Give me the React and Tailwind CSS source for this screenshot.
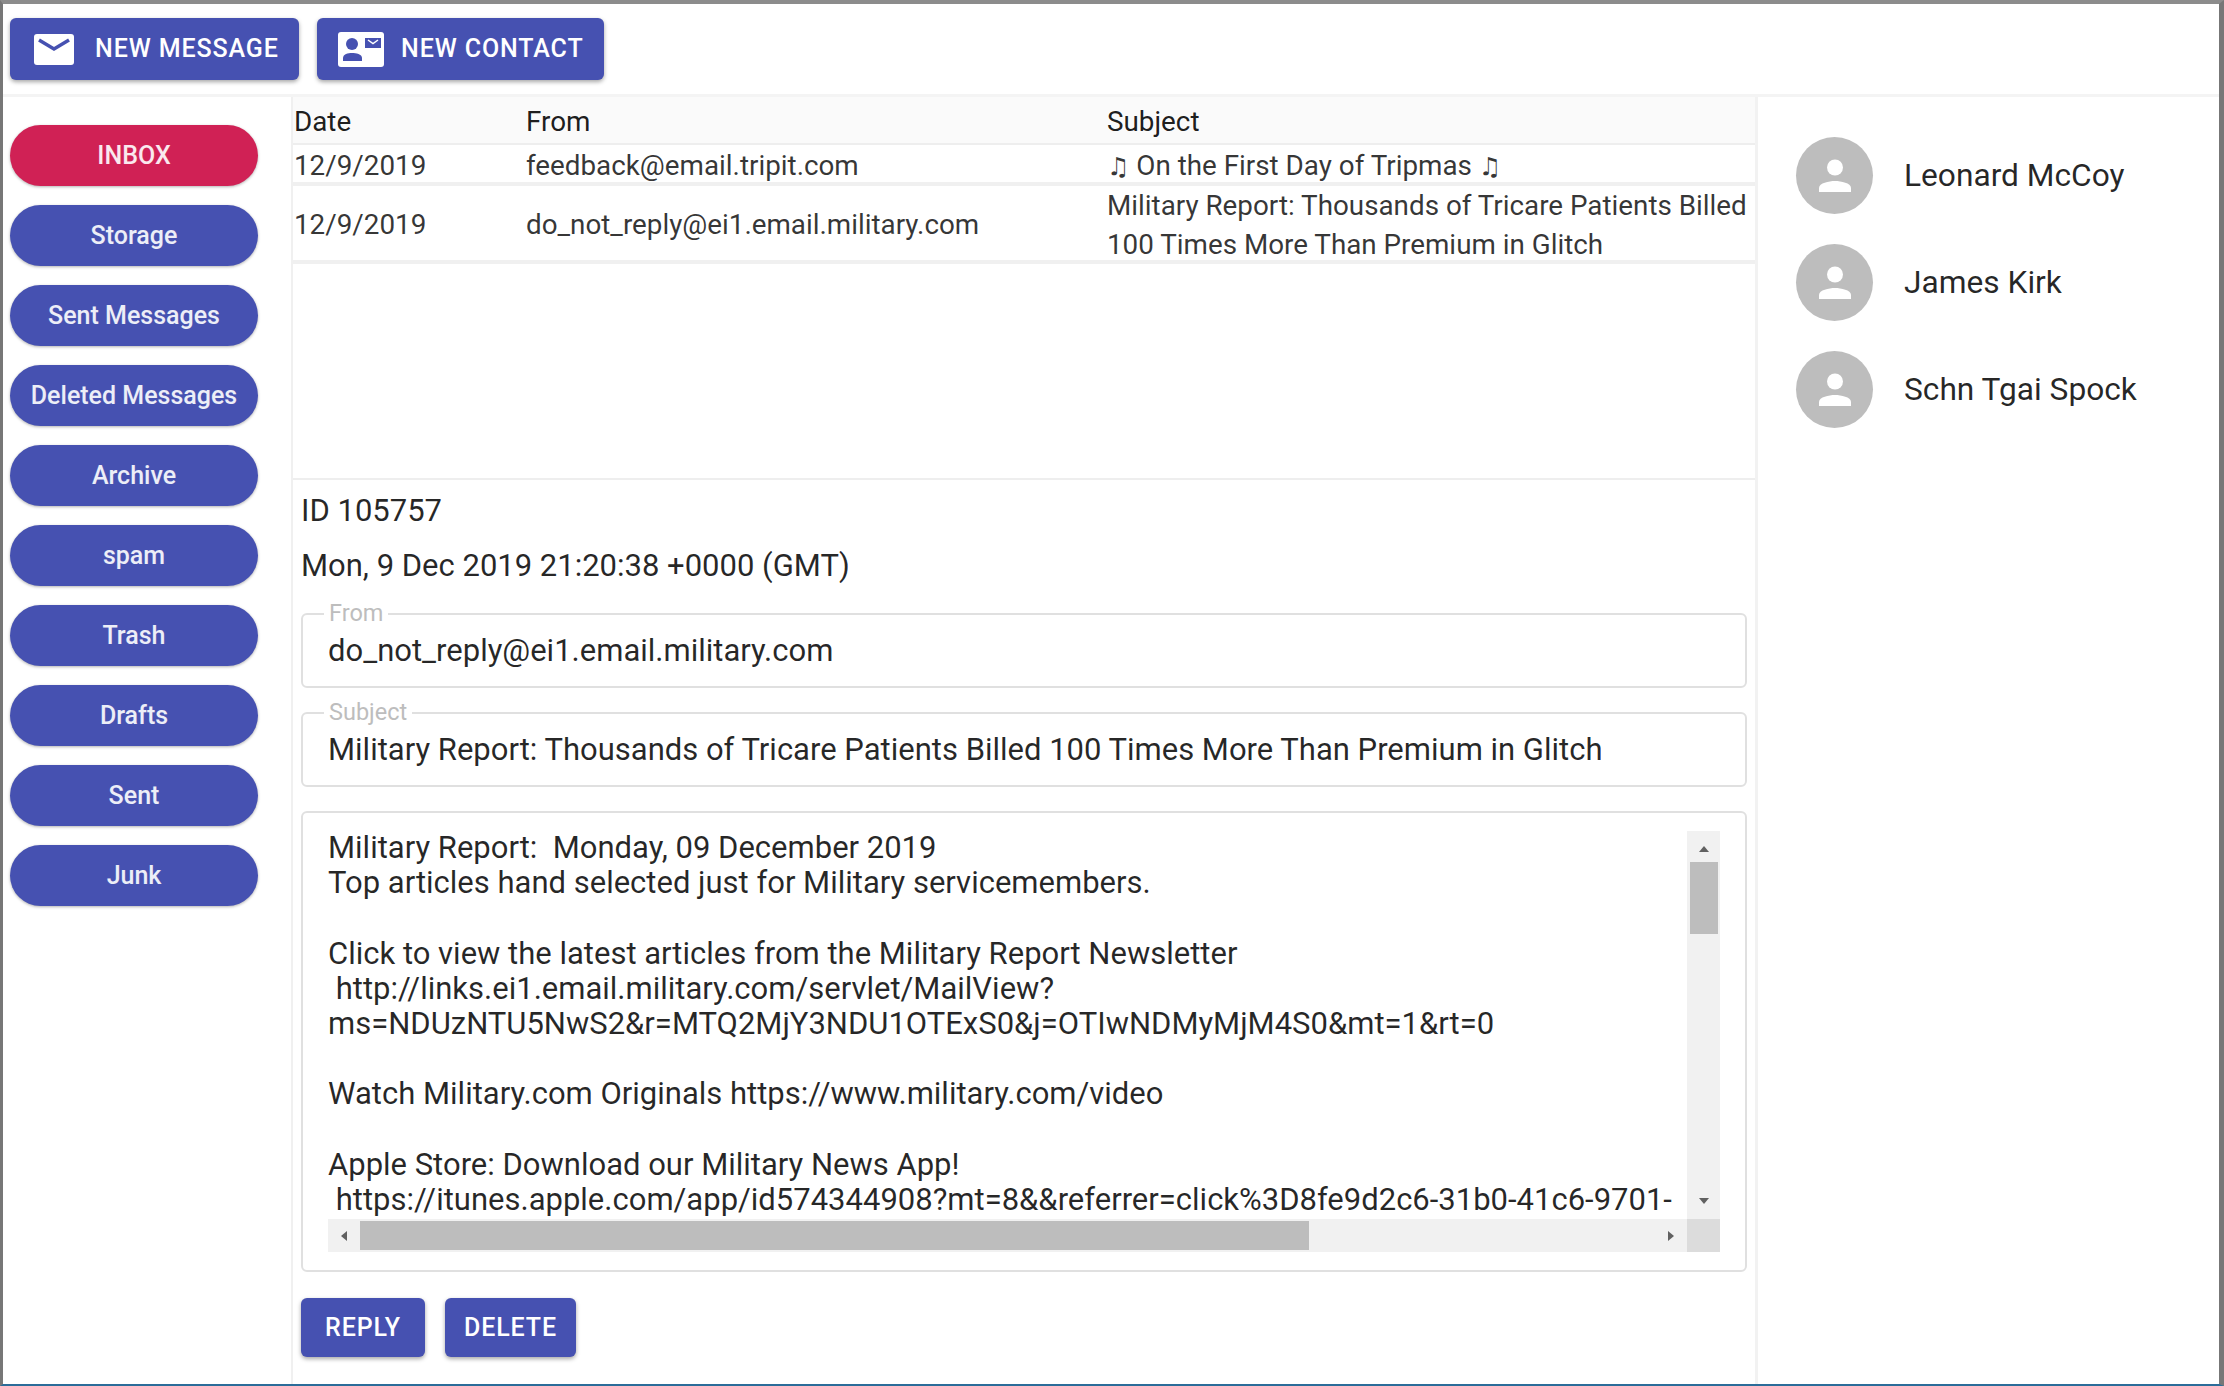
const folders = ['Storage', 'Sent Messages', 'Deleted Messages', 'Archive', 'spam', 'Trash', 'Drafts', 'Sent', 'Junk'];
const contacts = ['Leonard McCoy', 'James Kirk', 'Schn Tgai Spock'];

const MailIcon = () => (
  <svg width="40" height="31" viewBox="0 0 40 31" className="shrink-0">
    <rect width="40" height="31" rx="3" fill="#fff" />
    <path d="M5 6 L20 15 L35 6" fill="none" stroke="#4651b1" strokeWidth="3.5" />
  </svg>
);

const ContactIcon = () => (
  <svg width="46" height="35" viewBox="0 0 46 35" className="shrink-0">
    <rect width="46" height="35" rx="3" fill="#fff" />
    <circle cx="14" cy="12" r="6" fill="#4651b1" />
    <path d="M5 29 V26 C5 22 10 21 14 21 C18 21 24 22 24 26 V29 Z" fill="#4651b1" />
    <rect x="27" y="6" width="16" height="10" fill="#4651b1" />
    <path d="M30 8 L35 11.5 L40 8" fill="none" stroke="#fff" strokeWidth="1.5" />
  </svg>
);

const PersonIcon = () => (
  <svg width="34" height="33" viewBox="0 0 34 33">
    <circle cx="17" cy="8.5" r="8" fill="#fff" />
    <path d="M1 33 V29 C1 24 11 22 17 22 C23 22 33 24 33 29 V33 Z" fill="#fff" />
  </svg>
);

const Field = ({ label, children }) => (
  <div className="relative h-[75px] border-2 border-[#e0e0e0] rounded-md px-[25px] pt-[2px] flex items-center text-[31px] text-black/85">
    <span className="absolute left-[21px] top-[-15px] bg-white px-[5px] text-[23.5px] leading-[26px] text-[#bdbdbd]">{label}</span>
    {children}
  </div>
);

const Arrow = ({ d }) => (
  <svg width="12" height="12" viewBox="0 0 12 12"><path d={d} fill="#616161" /></svg>
);

const Note = () => <span className="font-['DejaVu_Sans'] text-[25px]">♫</span>;

export default function App() {
  return (
    <div className="w-[2224px] h-[1386px] flex flex-col bg-white border-t-[4px] border-t-[#8c8c8c] border-l-[3px] border-l-[#777] border-r-[5px] border-r-[#777] border-b-[2px] border-b-[#2b6c99] font-['Roboto',sans-serif] overflow-hidden">
      <header className="h-[93px] shrink-0 flex gap-[18px] pl-[7px] pt-[14px] border-b-[3px] border-[#f4f4f4]">
        <button className="w-[289px] h-[62px] flex items-center pl-[24px] gap-[21px] rounded-md bg-[#4651b1] text-white text-[25px] tracking-[0.9px] font-medium shadow-[0_2px_4px_rgba(0,0,0,0.35)]">
          <MailIcon />
          NEW MESSAGE
        </button>
        <button className="w-[287px] h-[62px] flex items-center pl-[21px] gap-[17px] rounded-md bg-[#4651b1] text-white text-[25px] tracking-[0.9px] font-medium shadow-[0_2px_4px_rgba(0,0,0,0.35)]">
          <ContactIcon />
          NEW CONTACT
        </button>
      </header>

      <div className="flex flex-1 min-h-0">
        <aside className="w-[290px] shrink-0 border-r-[2px] border-[#f0f0f0] pl-[7px] pt-[28px] flex flex-col gap-[19px]">
          <button className="w-[248px] h-[61px] pt-[1px] rounded-full bg-[#d02155] text-white/90 text-[25px] font-medium shadow-[0_1px_3px_rgba(0,0,0,0.3)]">INBOX</button>
          {folders.map((name) => (
            <button key={name} className="w-[248px] h-[61px] pt-[1px] rounded-full bg-[#4651b1] text-white/90 text-[25px] font-medium shadow-[0_1px_3px_rgba(0,0,0,0.3)]">{name}</button>
          ))}
        </aside>

        <main className="w-[1465px] shrink-0 border-r-[3px] border-[#f2f2f2] flex flex-col">
          <div className="h-[383px] shrink-0 border-b-[2px] border-[#eee] text-[27.8px] text-black/80">
            <div className="h-[48px] grid grid-cols-[232px_581px_1fr] items-center pl-[1px] pt-[4px] bg-[#fafafa] border-b-[2px] border-[#eee] text-black/90">
              <span>Date</span>
              <span>From</span>
              <span>Subject</span>
            </div>
            <div className="h-[41px] grid grid-cols-[232px_581px_1fr] items-center pl-[1px] border-b-[4px] border-[#f0f0f0]">
              <span>12/9/2019</span>
              <span>feedback@email.tripit.com</span>
              <span><Note /> On the First Day of Tripmas <Note /></span>
            </div>
            <div className="h-[78px] grid grid-cols-[232px_581px_1fr] items-center pl-[1px] pb-[2px] border-b-[4px] border-[#f0f0f0]">
              <span>12/9/2019</span>
              <span>do_not_reply@ei1.email.military.com</span>
              <span className="leading-[39px] whitespace-nowrap">Military Report: Thousands of Tricare Patients Billed<br />100 Times More Than Premium in Glitch</span>
            </div>
          </div>

          <div className="flex-1 min-h-0 px-[8px]">
            <p className="mt-[13px] leading-[36px] text-[31px] text-black/85">ID 105757</p>
            <p className="mt-[19px] leading-[36px] text-[31px] text-black/85">Mon, 9 Dec 2019 21:20:38 +0000 (GMT)</p>

            <div className="mt-[29px] flex flex-col gap-[24px]">
              <Field label="From">do_not_reply@ei1.email.military.com</Field>
              <Field label="Subject">Military Report: Thousands of Tricare Patients Billed 100 Times More Than Premium in Glitch</Field>
            </div>

            <div className="mt-[24px] h-[461px] border-2 border-[#e0e0e0] rounded-md pl-[25px] pr-[25px] pt-[18px] pb-[18px]">
              <div className="h-full grid grid-cols-[1fr_33px] grid-rows-[1fr_33px]">
                <div className="overflow-hidden whitespace-pre text-[31px] leading-[35.2px] text-black/85 -mt-[1px]">
                  {`Military Report:  Monday, 09 December 2019
Top articles hand selected just for Military servicemembers.

Click to view the latest articles from the Military Report Newsletter
 http://links.ei1.email.military.com/servlet/MailView?
ms=NDUzNTU5NwS2&r=MTQ2MjY3NDU1OTExS0&j=OTIwNDMyMjM4S0&mt=1&rt=0

Watch Military.com Originals https://www.military.com/video

Apple Store: Download our Military News App!
 https://itunes.apple.com/app/id574344908?mt=8&&referrer=click%3D8fe9d2c6-31b0-41c6-9701-`}
                </div>
                <div className="bg-[#f1f1f1] flex flex-col items-center pt-[12px]">
                  <Arrow d="M6 3 L11 9 H1 Z" />
                  <div className="mt-[7px] w-[28px] h-[72px] bg-[#bdbdbd]" />
                  <div className="mt-auto mb-[12px]"><Arrow d="M1 3 H11 L6 9 Z" /></div>
                </div>
                <div className="bg-[#f1f1f1] flex items-center">
                  <div className="w-[32px] flex justify-center"><Arrow d="M3 6 L9 1 V11 Z" /></div>
                  <div className="w-[949px] h-[29px] bg-[#bdbdbd]" />
                  <div className="ml-auto w-[32px] flex justify-center"><Arrow d="M9 6 L3 1 V11 Z" /></div>
                </div>
                <div className="bg-[#dcdcdc]" />
              </div>
            </div>

            <div className="mt-[26px] flex gap-[20px]">
              <button className="w-[124px] h-[59px] rounded-md bg-[#4651b1] text-white text-[25px] tracking-[0.9px] font-medium shadow-[0_2px_4px_rgba(0,0,0,0.35)]">REPLY</button>
              <button className="w-[131px] h-[59px] rounded-md bg-[#4651b1] text-white text-[25px] tracking-[0.9px] font-medium shadow-[0_2px_4px_rgba(0,0,0,0.35)]">DELETE</button>
            </div>
          </div>
        </main>

        <aside className="flex-1 pl-[38px] pt-[40px] flex flex-col gap-[30px]">
          {contacts.map((name) => (
            <div key={name} className="flex items-center gap-[31px]">
              <div className="w-[77px] h-[77px] rounded-full bg-[#bdbdbd] flex items-center justify-center">
                <PersonIcon />
              </div>
              <span className="text-[31.7px] text-black/85">{name}</span>
            </div>
          ))}
        </aside>
      </div>
    </div>
  );
}
